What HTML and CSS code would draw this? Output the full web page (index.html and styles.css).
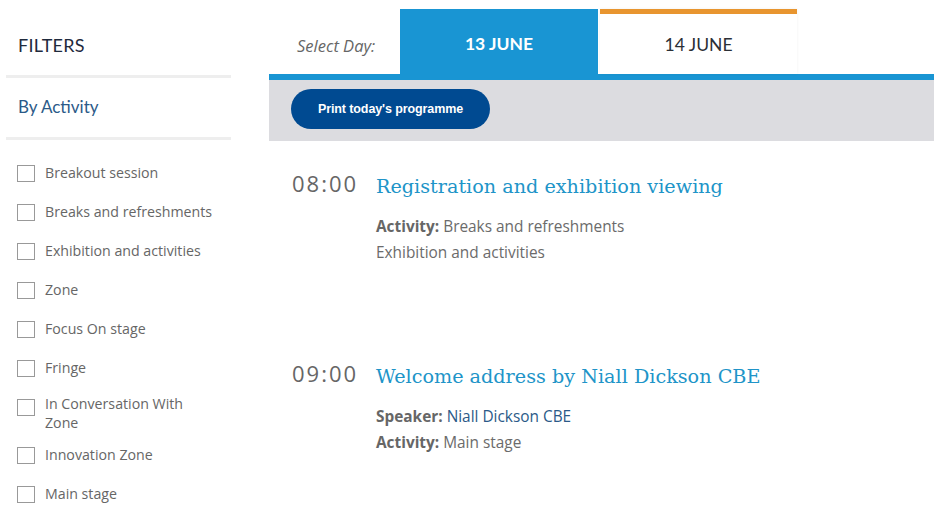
FILE: index.html
```html
<!DOCTYPE html>
<html>
<head>
<meta charset="utf-8">
<link rel="stylesheet" href="styles.css">
</head>
<body>
<div class="page">
  <aside class="sidebar">
    <div class="filters-head">FILTERS</div>
    <div class="section-head">By Activity</div>
    <ul class="filter-list">
      <li class="filter"><span class="box"></span><span class="label">Breakout session</span></li>
      <li class="filter"><span class="box"></span><span class="label">Breaks and refreshments</span></li>
      <li class="filter"><span class="box"></span><span class="label">Exhibition and activities</span></li>
      <li class="filter"><span class="box"></span><span class="label">Zone</span></li>
      <li class="filter"><span class="box"></span><span class="label">Focus On stage</span></li>
      <li class="filter"><span class="box"></span><span class="label">Fringe</span></li>
      <li class="filter"><span class="box"></span><span class="label label-multi">In Conversation With<br>Zone</span></li>
      <li class="filter"><span class="box"></span><span class="label">Innovation Zone</span></li>
      <li class="filter"><span class="box"></span><span class="label">Main stage</span></li>
    </ul>
  </aside>
  <main class="main">
    <div class="tabs">
      <div class="select-label">Select Day:</div>
      <div class="tab tab-active">13 JUNE</div>
      <div class="tab tab-other">14 JUNE</div>
    </div>
    <div class="toolbar">
      <button class="print-btn">Print today's programme</button>
    </div>
    <div class="events">
      <div class="event">
        <div class="time">08:00</div>
        <div class="info">
          <div class="title">Registration and exhibition viewing</div>
          <div class="details">
            <div><b>Activity:</b> Breaks and refreshments</div>
            <div>Exhibition and activities</div>
          </div>
        </div>
      </div>
      <div class="event">
        <div class="time">09:00</div>
        <div class="info">
          <div class="title">Welcome address by Niall Dickson CBE</div>
          <div class="details">
            <div><b>Speaker:</b> <span class="speaker">Niall Dickson CBE</span></div>
            <div><b>Activity:</b> Main stage</div>
          </div>
        </div>
      </div>
    </div>
  </main>
</div>
</body>
</html>
```

FILE: styles.css
```css
* { box-sizing: border-box; }
html, body { margin: 0; padding: 0; background: #fff; }
body { font-family: "Open Sans", sans-serif; width: 934px; height: 516px; overflow: hidden; }

.page { display: flex; align-items: flex-start; }

.sidebar { width: 225px; margin-left: 6px; flex-shrink: 0; }
.filters-head {
  height: 78px; padding-left: 12px; padding-top: 33px;
  font-family: Lato, sans-serif; font-size: 18px; line-height: 24px;
  color: #1f2a3d; letter-spacing: 0.3px;
  border-bottom: 3px solid #eeeeee;
}
.section-head {
  height: 62px; padding-left: 12px; padding-top: 17px;
  font-family: Lato, sans-serif; font-size: 17px; line-height: 24px;
  color: #2b5a88;
  border-bottom: 3px solid #eeeeee;
}
.filter-list { list-style: none; margin: 0; padding: 23px 0 0 11px; }
.filter { display: flex; align-items: flex-start; min-height: 29px; margin-bottom: 10px; }
.box {
  width: 18px; height: 17px; border: 1px solid #999; margin-top: 2px; margin-right: 10px; flex-shrink: 0;
}
.label { font-size: 14.2px; line-height: 19px; color: #666; }
.label-multi { margin-top: -3px; margin-bottom: 3px; }

.main { margin-left: 38px; flex: 1; }
.tabs { display: flex; align-items: flex-end; height: 74px; }
.select-label {
  align-self: center; margin-top: 16px;
  width: 131px; padding-left: 28px;
  font-style: italic; font-size: 16.5px; color: #666;
}
.tab {
  width: 198px; height: 65px;
  display: flex; align-items: center; justify-content: center;
  font-family: Lato, sans-serif; font-size: 17.5px;
}
.tab-active { background: #1995d3; color: #fff; font-weight: 700; padding-top: 4px; }
.tab-other {
  margin-left: 2px; width: 197px; background: #fff; color: #2b2f36;
  border-top: 5px solid #e8952f;
  box-shadow: 0 0 3px rgba(0,0,0,0.06);
}
.toolbar {
  border-top: 6px solid #1995d3;
  background: #dcdce0; height: 67px; padding: 9px 0 0 22px;
}
.print-btn {
  width: 199px; height: 40px; border: none; border-radius: 20px;
  background: #004a91; color: #fff;
  font-family: "Liberation Sans", Arial, sans-serif; font-weight: 700; font-size: 12.5px;
  letter-spacing: -0.1px;
}

.events { padding: 32px 0 0 23px; }
.event { display: flex; align-items: flex-start; padding-bottom: 97px; }
.time {
  width: 84px; flex-shrink: 0;
  font-size: 22px; line-height: 20px; letter-spacing: 2px; color: #666; font-weight: 400;
}
.title {
  font-family: "DejaVu Serif", serif; font-size: 19.2px; line-height: 28px;
  color: #2094c8;
}
.details { margin-top: 13px; font-size: 15.4px; line-height: 26px; color: #6b6b6b; }
.details b { font-weight: 700; color: #666; }
.speaker { color: #2b5a88; }
```
